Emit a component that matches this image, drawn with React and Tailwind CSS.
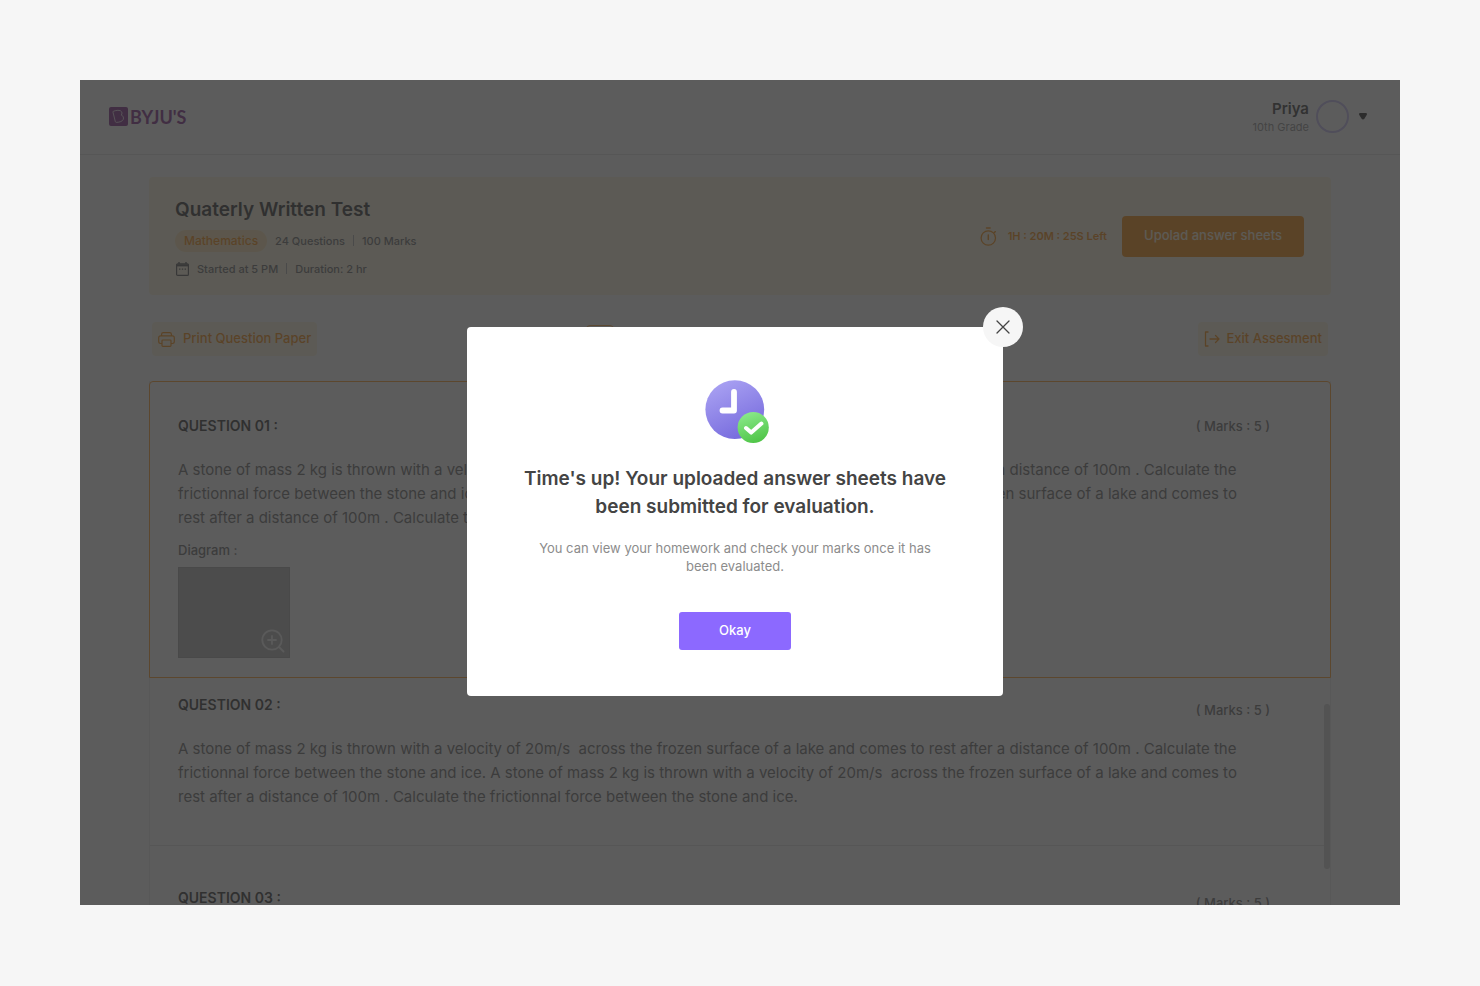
import { Fragment } from 'react';

const questionLines = [
    'A stone of mass 2 kg is thrown with a velocity of 20m/s\u00a0 across the frozen surface of a lake and comes to rest after a distance of 100m . Calculate the',
    'frictionnal force between the stone and ice. A stone of mass 2 kg is thrown with a velocity of 20m/s\u00a0 across the frozen surface of a lake and comes to',
    'rest after a distance of 100m . Calculate the frictionnal force between the stone and ice.',
];

const App = () => (
    <div className="h-screen bg-[#f6f6f6] p-20 pb-[81px] font-['Inter',sans-serif]">
        <div className="relative h-full overflow-hidden bg-white">
            <Header />
            <main className="px-[69px] pt-[22px]">
                <TestBanner />
                <Toolbar />
                <div className="relative mt-[25px] border-x border-[#ececec]">
                    <Question number="01" active>
                        <p className="mt-[10px] text-[13px] leading-5 font-medium text-[#777]">Diagram :</p>
                        <div className="mt-[7px] flex h-[91px] w-[112px] items-end justify-end border border-[#adadad] bg-[#bababa] p-1">
                            <button aria-label="Zoom diagram" className="text-[#f4f4f4]">
                                <ZoomIcon />
                            </button>
                        </div>
                    </Question>
                    <Question number="02" />
                    <Question number="03" />
                    {/* Scrollbar thumb */}
                    <div className="absolute top-[323px] right-0 h-[165px] w-[6px] rounded-full bg-[#d6d6d6]"></div>
                </div>
            </main>

            <SubmittedDialog />
        </div>
    </div>
);

const Header = () => (
    <header className="flex h-[75px] items-center justify-between border-b border-[#e4e4e4] pr-[33px] pb-px pl-[29px]">
        <a href="#" className="flex items-center gap-[2px] text-[#8a3a92]">
            <LogoMark />
            <span className="font-['Lato',sans-serif] text-lg leading-5 font-bold">BYJU'S</span>
        </a>
        <div className="flex items-center">
            <div className="text-right">
                <p className="text-[15px] leading-5 font-semibold text-[#4a4a4a]">Priya</p>
                <p className="text-[11px] leading-4 text-[#979797]">10th Grade</p>
            </div>
            <div className="ml-[7px] h-[33px] w-[33px] rounded-full border-2 border-[#c9c0f5]"></div>
            <button aria-label="Account menu" className="ml-[10px] text-[#333]">
                <svg width="8" height="7" viewBox="0 0 8 7" fill="currentColor">
                    <path d="M1.2 0h5.6c1 0 1.5 1.1.9 2L5.400 5.800c-.7 1-2.100 1-2.800 0L.3 2C-.3 1.100.2 0 1.200 0z" />
                </svg>
            </button>
        </div>
    </header>
);

const TestBanner = () => (
    <section className="flex h-[118px] items-center justify-between rounded-sm bg-[#fff6e0] pr-[27px] pl-[26px]">
        <div className="pt-[3px]">
            <h1 className="text-[19px] leading-7 font-semibold text-[#444]">Quaterly Written Test</h1>
            <div className="mt-[6px] flex items-center text-[11px] leading-[22px] font-medium text-[#777]">
                <span className="rounded-full bg-[#ffe6b8] px-[9px] text-xs leading-[22px] text-[#f7941d]">Mathematics</span>
                <span className="ml-[8px]">24 Questions</span>
                <Divider />
                <span>100 Marks</span>
            </div>
            <div className="mt-[6px] flex items-center text-[11px] leading-[22px] font-medium text-[#777]">
                <CalendarIcon />
                <span className="ml-[8px]">Started at 5 PM</span>
                <Divider />
                <span>Duration: 2 hr</span>
            </div>
        </div>
        <div className="flex items-center">
            <TimerIcon />
            <span className="ml-[11px] text-[11px] font-semibold text-[#f7941d]">1H : 20M : 25S Left</span>
            <button className="ml-[15px] h-[41px] rounded-sm bg-[#f7941d] px-[22px] text-[13px] font-medium text-[#fff6e0]">
                Upolad answer sheets
            </button>
        </div>
    </section>
);

const Divider = () => <span className="mx-[8px] h-[11px] w-px bg-[#b0b0b0]"></span>;

const Toolbar = () => (
    <div className="mt-[27px] flex items-center justify-between px-[3px] text-[13px] font-medium text-[#f7941d]">
        <button className="flex h-[34px] items-center gap-[8px] rounded-sm bg-[#fff6e0] px-[6px]">
            <PrintIcon />
            Print Question Paper
        </button>
        <div className="mr-auto ml-[269px] h-7 w-[28px] rounded-sm border border-[#ffab4a]"></div>
        <button className="flex h-[34px] items-center gap-[6px] rounded-sm bg-[#fff6e0] px-[6px]">
            <ExitIcon />
            Exit Assesment
        </button>
    </div>
);

const Question = ({ number, active, children }) => (
    <article
        className={
            active
                ? '-mx-px h-[297px] rounded-t-sm border border-[#ffa53a] px-[28px] pt-[34px]'
                : 'border-b border-[#e4e4e4] px-[28px] pt-[17px] pb-[36px] last-of-type:pt-[42px]'
        }
    >
        <div className="flex items-start justify-between pr-[32px]">
            <h2 className="text-[14px] leading-5 font-semibold text-[#444]">QUESTION {number} :</h2>
            <span className={active ? 'text-[13px] leading-5 font-medium text-[#777]' : 'mt-[5px] -mb-[5px] text-[13px] leading-5 font-medium text-[#777]'}>
                ( Marks : 5 )
            </span>
        </div>
        <p className="mt-[22px] text-[15px] leading-6 whitespace-nowrap text-[#777]">
            {questionLines.map((line) => (
                <Fragment key={line}>
                    {line}
                    <br />
                </Fragment>
            ))}
        </p>
        {children}
    </article>
);

const SubmittedDialog = () => (
    <div className="absolute inset-0 flex items-center justify-center bg-[#2b2b2b]/77 pt-[38px] pr-[10px]">
        <div role="dialog" aria-labelledby="dialog-title" className="relative flex w-[536px] flex-col items-center rounded-sm bg-white px-10 pt-[53px] pb-[46px] text-center">
            <button aria-label="Close" className="absolute -top-5 -right-5 flex h-10 w-10 items-center justify-center rounded-full bg-[#f6f6f6] text-[#444]">
                <svg width="14" height="14" viewBox="0 0 14 14" fill="none" stroke="currentColor" strokeWidth="1.3" strokeLinecap="round">
                    <path d="M1 1l12 12M13 1L1 13" />
                </svg>
            </button>
            <ClockDoneIcon />
            <h2 id="dialog-title" className="mt-[21px] text-[19px] leading-7 font-semibold text-[#444]">
                Time's up! Your uploaded answer sheets have
                <br />
                been submitted for evaluation.
            </h2>
            <p className="mt-[18px] text-[13px] leading-[18px] text-[#8c8c8c]">
                You can view your homework and check your marks once it has
                <br />
                been evaluated.
            </p>
            <button className="mt-[37px] h-[38px] w-[112px] rounded-[3px] bg-[#8c69ff] text-[13px] font-medium text-white">Okay</button>
        </div>
    </div>
);

const LogoMark = () => (
    <svg width="19" height="19" viewBox="0 0 19 19">
        <rect width="19" height="19" rx="2" fill="currentColor" />
        {/* Tilted page outline with the notch of the B */}
        <path d="M4.300 4.300c2.500-1 5.500-1.300 7.200-.5 1.700.9 1.900 3 .8 4.300 1.800.6 2.600 2.400 2 4.200-.7 2-3.700 3-6.800 3.100-.7 0-1-.3-1.200-.9L4 5.200c-.1-.4 0-.7.3-.9z" fill="none" stroke="#fff" strokeWidth=".8" />
    </svg>
);

const CalendarIcon = () => (
    <svg className="ml-px" width="13" height="14" viewBox="0 0 13 14" fill="none" stroke="#666" strokeWidth="1.2">
        <rect x=".6" y="1.800" width="11.800" height="11.600" rx="1" />
        <path d="M.6 3.300h11.800" strokeWidth="2.200" />
        <path d="M3 0v2M10 0v2" strokeWidth="1.400" />
        <path d="M3 7.200h1.400M5.800 7.200h1.400M8.600 7.200H10" />
    </svg>
);

const TimerIcon = () => (
    <svg width="17" height="19" viewBox="0 0 17 19" fill="none" stroke="#f7941d" strokeWidth="1.300" strokeLinecap="round">
        <circle cx="8.300" cy="11" r="7.200" />
        <path d="M8.300 8v4.500M6.500 1h3.600M14.300 5.500l1-.8" strokeWidth="1.500" />
    </svg>
);

const PrintIcon = () => (
    <svg width="17" height="15" viewBox="0 0 17 15" fill="none" stroke="currentColor" strokeWidth="1.200" strokeLinejoin="round">
        <path d="M4 11.500H2.600a1.900 1.900 0 0 1-1.900-1.900V5.800c0-1 .8-1.900 1.900-1.900h11.800c1 0 1.900.9 1.900 1.900v3.800c0 1-.9 1.900-1.900 1.900H13" />
        <rect x="4" y="8" width="9" height="6.300" rx=".8" />
        <path d="M3.600 3.900V2.300c0-.9.700-1.600 1.600-1.600h6.600c.9 0 1.600.7 1.600 1.600v1.600" />
    </svg>
);

const ExitIcon = () => (
    <svg width="17" height="16" viewBox="0 0 17 16" fill="none" stroke="currentColor" strokeWidth="1.300" strokeLinecap="round" strokeLinejoin="round">
        <path d="M4 1H1.500v14H4M6 8h9M11.500 4.500L15 8l-3.500 3.500" />
    </svg>
);

const ZoomIcon = () => (
    <svg width="24" height="24" viewBox="0 0 24 24" fill="none" stroke="currentColor" strokeWidth="1.800" strokeLinecap="round">
        <circle cx="11" cy="11" r="9.700" />
        <path d="M18 18l4.500 4.500M11 7v8M7 11h8" />
    </svg>
);

const ClockDoneIcon = () => (
    <svg className="ml-1" width="64" height="64" viewBox="0 0 64 64" fill="none" strokeLinecap="round" strokeLinejoin="round">
        <defs>
            <linearGradient id="clock" x1="15" y1="2" x2="42" y2="60" gradientUnits="userSpaceOnUse">
                <stop stopColor="#a8a0f2" />
                <stop offset="1" stopColor="#7468dc" />
            </linearGradient>
            <linearGradient id="done" x1="43" y1="33" x2="53" y2="62" gradientUnits="userSpaceOnUse">
                <stop stopColor="#88e888" />
                <stop offset="1" stopColor="#50c548" />
            </linearGradient>
        </defs>
        <circle cx="29.800" cy="29.600" r="29.400" fill="url(#clock)" />
        <path d="M29 12v18.500H17.500" stroke="#fff" strokeWidth="5.800" />
        <circle cx="48.200" cy="47.500" r="15.600" fill="url(#done)" />
        <path d="M41 48l5.200 4.600 10.200-9" stroke="#fff" strokeWidth="4" />
    </svg>
);

export default App;
